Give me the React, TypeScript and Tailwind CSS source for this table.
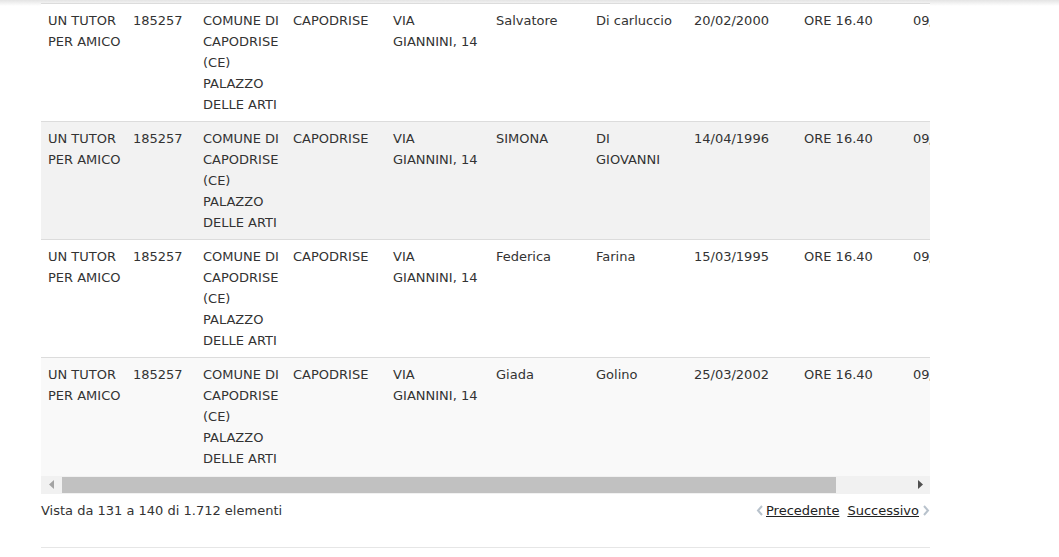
import React from 'react';

type Row = {
  progetto: string;
  codice: string;
  sede: string;
  comune: string;
  indirizzo: string;
  nome: string;
  cognome: string;
  nascita: string;
  ora: string;
  data: string;
};

const base = {
  progetto: 'UN TUTOR PER AMICO',
  codice: '185257',
  sede: 'COMUNE DI CAPODRISE (CE) PALAZZO DELLE ARTI',
  comune: 'CAPODRISE',
  indirizzo: 'VIA\nGIANNINI, 14',
  ora: 'ORE 16.40',
  data: '09/03/2021',
};

const rows: Row[] = [
  { ...base, nome: 'Salvatore', cognome: 'Di carluccio', nascita: '20/02/2000' },
  { ...base, nome: 'SIMONA', cognome: 'DI\nGIOVANNI', nascita: '14/04/1996' },
  { ...base, nome: 'Federica', cognome: 'Farina', nascita: '15/03/1995' },
  { ...base, nome: 'Giada', cognome: 'Golino', nascita: '25/03/2002' },
];

const rowBg = ['bg-white', 'bg-[#f2f2f2]', 'bg-white', 'bg-[#f9f9f9]'];

const App: React.FC = () => {
  return (
    <div className="min-h-[557px] bg-white text-[13px] leading-[21px] text-[#333] font-['DejaVu_Sans',Verdana,sans-serif]">
      <div className="h-[6px] bg-gradient-to-b from-[#e4e4e4] to-white -mb-[3px]" />
      <div className="ml-[41px] w-[889px]">
        <div className="overflow-hidden">
          <table className="table-fixed w-[1150px] border-collapse">
            <colgroup>
              <col className="w-[85px]" />
              <col className="w-[70px]" />
              <col className="w-[90px]" />
              <col className="w-[100px]" />
              <col className="w-[103px]" />
              <col className="w-[100px]" />
              <col className="w-[98px]" />
              <col className="w-[110px]" />
              <col className="w-[109px]" />
              <col className="w-[285px]" />
            </colgroup>
            <tbody>
              {rows.map((r, i) => (
                <tr key={i} className={`${rowBg[i]} border-t border-[#dcdcdc] align-top whitespace-pre-line`}>
                  <td className="pl-[7px] pr-1 pt-[6px] pb-[6px] h-[118px]">{r.progetto}</td>
                  <td className="pl-[7px] pr-1 pt-[6px]">{r.codice}</td>
                  <td className="pl-[7px] pr-1 pt-[6px]">{r.sede}</td>
                  <td className="pl-[7px] pr-1 pt-[6px]">{r.comune}</td>
                  <td className="pl-[7px] pr-1 pt-[6px]">{r.indirizzo}</td>
                  <td className="pl-[7px] pr-1 pt-[6px]">{r.nome}</td>
                  <td className="pl-[7px] pr-1 pt-[6px]">{r.cognome}</td>
                  <td className="pl-[7px] pr-1 pt-[6px]">{r.nascita}</td>
                  <td className="pl-[7px] pr-1 pt-[6px]">{r.ora}</td>
                  <td className="pl-[7px] pr-1 pt-[6px]">{r.data}</td>
                </tr>
              ))}
            </tbody>
          </table>
        </div>

        {/* horizontal scrollbar */}
        <div className="flex h-[18px] bg-[#f1f1f1]">
          <div className="w-[21px] flex items-center justify-center">
            <svg width="6" height="9" viewBox="0 0 6 9">
              <path d="M5 0 L0 4.5 L5 9 Z" fill="#a3a3a3" />
            </svg>
          </div>
          <div className="w-[774px] my-[1px] bg-[#c1c1c1]" />
          <div className="flex-1" />
          <div className="w-[20px] flex items-center justify-center">
            <svg width="6" height="9" viewBox="0 0 6 9">
              <path d="M1 0 L6 4.5 L1 9 Z" fill="#505050" />
            </svg>
          </div>
        </div>

        <div className="flex items-center justify-between h-[32px] pt-[1px]">
          <span>Vista da 131 a 140 di 1.712 elementi</span>
          <div className="flex items-center">
            <svg width="8" height="11" viewBox="0 0 8 11" className="mr-[2px]">
              <path d="M6 1 L2 5.5 L6 10" stroke="#b8c2cc" strokeWidth="2" fill="none" />
            </svg>
            <a className="underline text-[#222]" href="#">Precedente</a>
            <a className="underline text-[#222] ml-[8px]" href="#">Successivo</a>
            <svg width="8" height="11" viewBox="0 0 8 11" className="ml-[3px]">
              <path d="M2 1 L6 5.5 L2 10" stroke="#b8c2cc" strokeWidth="2" fill="none" />
            </svg>
          </div>
        </div>

        <div className="mt-[21px] border-t border-[#e6e6e6]" />
      </div>
    </div>
  );
};

export default App;
